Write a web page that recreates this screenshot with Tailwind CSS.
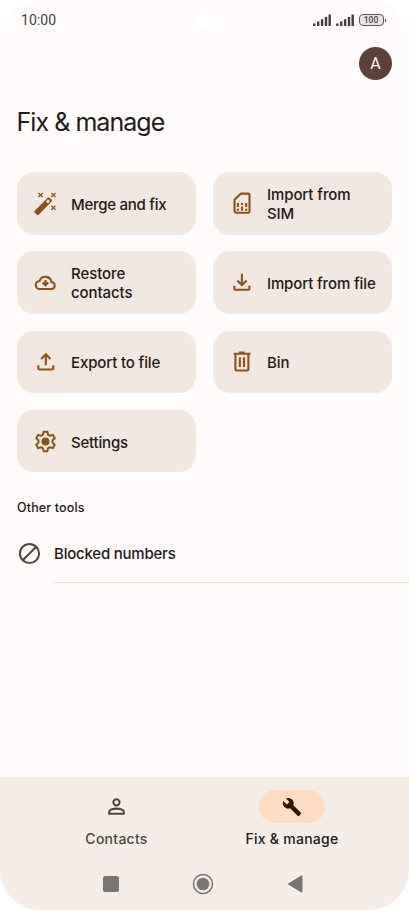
<!DOCTYPE html>
<html lang="en">
<head>
<meta charset="utf-8">
<meta name="viewport" content="width=device-width">
<title>Fix &amp; manage</title>
<script src="https://cdn.jsdelivr.net/npm/@tailwindcss/browser@4"></script>
</head>
<body class="bg-white font-['Inter','Roboto',sans-serif] text-[#211a17]">
<div class="relative flex h-[910px] w-[409px] flex-col overflow-hidden rounded-[40px] bg-[#fffbfa]">
  <div class="absolute left-[195px] top-[10px] size-[19px] rounded-full bg-white"></div>
  <header class="flex h-10 items-center justify-between pl-[21px] pr-[23px] text-[#443f3d]">
    <span class="font-['Roboto',sans-serif] text-[14px] font-[450] leading-5 tracking-[0.05px]">10:00</span>
    <div class="flex items-center gap-[5px]">
      <svg class="h-3 w-[18px]" viewBox="0 0 18 12" fill="none" stroke="currentColor" stroke-width="2.4"><path d="M1.3 12V9.6M5.2 12V7.5M9.1 12V5.2M13 12V3M16.7 12V.4"/></svg>
      <svg class="h-3 w-[18px]" viewBox="0 0 18 12" fill="none" stroke="currentColor" stroke-width="2.4"><path d="M1.3 12V9.6M5.2 12V7.5M9.1 12V5.2M13 12V3M16.7 12V.4"/></svg>
      <div class="flex items-center gap-px">
        <span class="flex h-3 w-[25px] items-center justify-center rounded-[4px] border-[1.5px] border-[#5b5654] bg-[#e8e4e3] font-['Roboto',sans-serif] text-[8.5px] font-medium leading-none">100</span>
        <span class="h-[3px] w-[1.5px] bg-current"></span>
      </div>
    </div>
  </header>
  <div class="flex justify-end pr-[17px] pt-[7px]">
    <div class="flex size-[33px] items-center justify-center rounded-full bg-[#5d4037] pt-px font-['Roboto',sans-serif] text-[16px] text-white">A</div>
  </div>
  <h1 class="ml-[16.5px] mt-[26px] h-8 whitespace-nowrap text-[25px] leading-8 tracking-[-0.95px]">Fix &amp; manage</h1>

  <main class="flex grow flex-col">
    <div class="mt-[34.2px] grid grid-cols-2 auto-rows-[62.4px] gap-[16.9px] px-[17px] text-[15px] font-[450] leading-[18.7px] tracking-[-0.08px]">
      <div class="flex items-center rounded-[17px] bg-[#f1e8e2] pl-4">
        <svg class="mr-[13px] size-[25px] shrink-0 text-[#8b5117]" viewBox="0 0 24 24"><path fill="currentColor" fill-rule="evenodd" d="M1.6 18.9 13.9 6.6a1.6 1.6 0 0 1 2.2 0l1.6 1.6a1.6 1.6 0 0 1 0 2.2L5.4 22.7a1.2 1.2 0 0 1-1.7 0l-2.1-2.1a1.2 1.2 0 0 1 0-1.7ZM12.4 10l1.9 1.9 2-2.1-1.9-1.9Z"/><path fill="none" stroke="currentColor" stroke-width="1.3" d="m5.3 1.9 4 4m0-4-4 4m12.3-4 4 4m0-4-4 4m0 8.2 4 4m0-4-4 4"/></svg>
        <span class="pt-[3px] tracking-[-0.27px]">Merge and fix</span>
      </div>
      <div class="flex items-center rounded-[17px] bg-[#f1e8e2] pl-4">
        <svg class="mr-[13px] size-[25px] shrink-0 text-[#8b5117]" viewBox="0 0 24 24"><path fill="none" stroke="currentColor" stroke-width="2" stroke-linejoin="round" d="M11 3h6.5a1.7 1.7 0 0 1 1.7 1.7v15a1.7 1.7 0 0 1-1.7 1.7h-11a1.7 1.7 0 0 1-1.7-1.7V8.8Z" transform="translate(.5 -.5)"/><path fill="currentColor" d="M7.5 11.5h2v3.8h-2zm4 0h2v2h-2zm4 0h2v3.8h-2zm-8 5.5h2v2h-2zm4-2.2h2V19h-2zm4 2.2h2v2h-2z"/></svg>
        <span class="pt-[3px]">Import from<br>SIM</span>
      </div>
      <div class="flex items-center rounded-[17px] bg-[#f1e8e2] pl-4">
        <svg class="mr-[13px] size-[25px] shrink-0 text-[#8b5117]" viewBox="0 0 24 24" fill="none" stroke="currentColor" stroke-width="2"><path d="M6.8 18.3a3.9 3.9 0 0 1-.5-7.8 5.9 5.9 0 0 1 11.4 1.1h.3a3.4 3.4 0 0 1 0 6.7Z"/><path d="M12 9.5v5m-2.7-2.6 2.7 2.7 2.7-2.7"/></svg>
        <span class="pt-[3px]">Restore<br>contacts</span>
      </div>
      <div class="flex items-center rounded-[17px] bg-[#f1e8e2] pl-4">
        <svg class="mr-[13px] size-[25px] shrink-0 text-[#8b5117]" viewBox="0 0 24 24" fill="none" stroke="currentColor" stroke-width="2"><path d="M12.4 3.5V14m-4.5-4 4.5 4.5 4.5-4.5M5.2 15v2.8A1.2 1.2 0 0 0 6.4 19h12a1.2 1.2 0 0 0 1.2-1.2V15"/></svg>
        <span class="whitespace-nowrap pt-[3px] tracking-[-0.12px]">Import from file</span>
      </div>
      <div class="flex items-center rounded-[17px] bg-[#f1e8e2] pl-4">
        <svg class="mr-[13px] size-[25px] shrink-0 text-[#8b5117]" viewBox="0 0 24 24" fill="none" stroke="currentColor" stroke-width="2"><path d="M12.3 15.5V5M7.8 9.5 12.3 5l4.5 4.5M5.1 15.6v2.8a1.2 1.2 0 0 0 1.2 1.2h12a1.2 1.2 0 0 0 1.2-1.2v-2.8"/></svg>
        <span class="pt-[3px] tracking-[-0.13px]">Export to file</span>
      </div>
      <div class="flex items-center rounded-[17px] bg-[#f1e8e2] pl-4">
        <svg class="mr-[13px] size-[25px] shrink-0 text-[#8b5117]" viewBox="0 0 24 24" fill="none" stroke="currentColor" stroke-width="2"><path d="M4.4 4.6h16.3M9.7 3.5h5.4M6.2 4.8v14.4a1.4 1.4 0 0 0 1.4 1.4h9.6a1.4 1.4 0 0 0 1.4-1.4V4.8M10.4 8v9.2m4-9.2v9.2"/></svg>
        <span class="pt-[3px]">Bin</span>
      </div>
      <div class="flex items-center rounded-[17px] bg-[#f1e8e2] pl-4">
        <svg class="mr-[13px] size-[25px] shrink-0 text-[#8b5117]" viewBox="0 0 24 24" fill="none" stroke="currentColor" stroke-width="1.9" stroke-linejoin="round"><path d="M10.1 2.7h3.8l.5 2.7 1.9 1.1 2.7-.9 1.9 3.2-2.1 1.9v2.6l2.1 1.9-1.9 3.2-2.7-.9-1.9 1.1-.5 2.7h-3.8l-.5-2.7-1.9-1.1-2.7.9-1.9-3.2 2.1-1.9v-2.6L3.1 8.8 5 5.6l2.7.9 1.9-1.1Z"/><circle cx="12" cy="12" r="3.8" fill="currentColor" stroke="none"/></svg>
        <span class="pt-[4px] tracking-[-0.2px]">Settings</span>
      </div>
    </div>
    <h2 class="ml-[17px] mt-[27px] text-[12.5px] font-[450] leading-[18px] tracking-[0.15px]">Other tools</h2>
    <div class="flex h-[66px] pl-[17px]">
      <svg class="mr-[12px] mt-[23.5px] size-[25px] text-[#52443c]" viewBox="0 0 24 24" fill="none" stroke="currentColor" stroke-width="1.9"><circle cx="12" cy="12" r="9.2"/><path d="M5.5 18.5 18.5 5.5"/></svg>
      <span class="grow border-b border-[#ece0d5] pt-[25px] text-[15px] font-[450] leading-[24px] tracking-[-0.22px]">Blocked numbers</span>
    </div>
  </main>

  <footer class="h-[133px] shrink-0 bg-[#f5ede8] pt-[13px]">
    <nav class="flex pl-[29px] text-[14px] font-[450] leading-[18px] tracking-[0.26px]">
      <div class="flex w-[175px] flex-col items-center gap-[7px] text-[#52443c]">
        <span class="flex h-[33px] w-[66px] items-center justify-center"><svg class="size-[25px]" viewBox="0 0 24 24" fill="none" stroke="currentColor" stroke-width="2"><circle cx="12" cy="8" r="3"/><path d="M5 19v-1.8C5 14.8 9.5 14 12 14s7 .8 7 3.2V19Z"/></svg></span>
        <span>Contacts</span>
      </div>
      <div class="flex w-[176px] flex-col items-center gap-[7px]">
        <span class="flex h-[33px] w-[66px] items-center justify-center rounded-full bg-[#ffdcc2] text-[#2e1500]"><svg class="size-[20px]" viewBox="0 0 24 24" fill="currentColor"><path d="m22.7 19-9.1-9.1c.9-2.3.4-5-1.5-6.9-2-2-5-2.4-7.4-1.3L9 6 6 9 1.6 4.7C.4 7.1.9 10.1 2.9 12.1c1.9 1.9 4.6 2.4 6.9 1.5l9.1 9.1c.4.4 1 .4 1.4 0l2.3-2.3c.5-.4.5-1.1.1-1.4Z"/></svg></span>
        <span class="whitespace-nowrap">Fix &amp; manage</span>
      </div>
    </nav>
    <div class="mt-[25px] flex h-[22px] items-center pl-[103px] text-[#787472]">
      <span class="size-[15.5px] rounded-[2.5px] bg-current"></span>
      <svg class="ml-[73.5px] size-[22px]" viewBox="0 0 22 22"><circle cx="11" cy="11" r="9.5" fill="none" stroke="currentColor" stroke-width="1.5"/><circle cx="11" cy="11" r="6.3" fill="currentColor"/></svg>
      <svg class="ml-[74px] h-[18px] w-[15px]" viewBox="0 0 15 18" fill="currentColor"><path d="M.6 8.2 13.3.5c.6-.4 1.2 0 1.2.6v15.8c0 .6-.6 1-1.2.6L.6 9.8a.9.9 0 0 1 0-1.6Z"/></svg>
    </div>
  </footer>
</div>
</body>
</html>
